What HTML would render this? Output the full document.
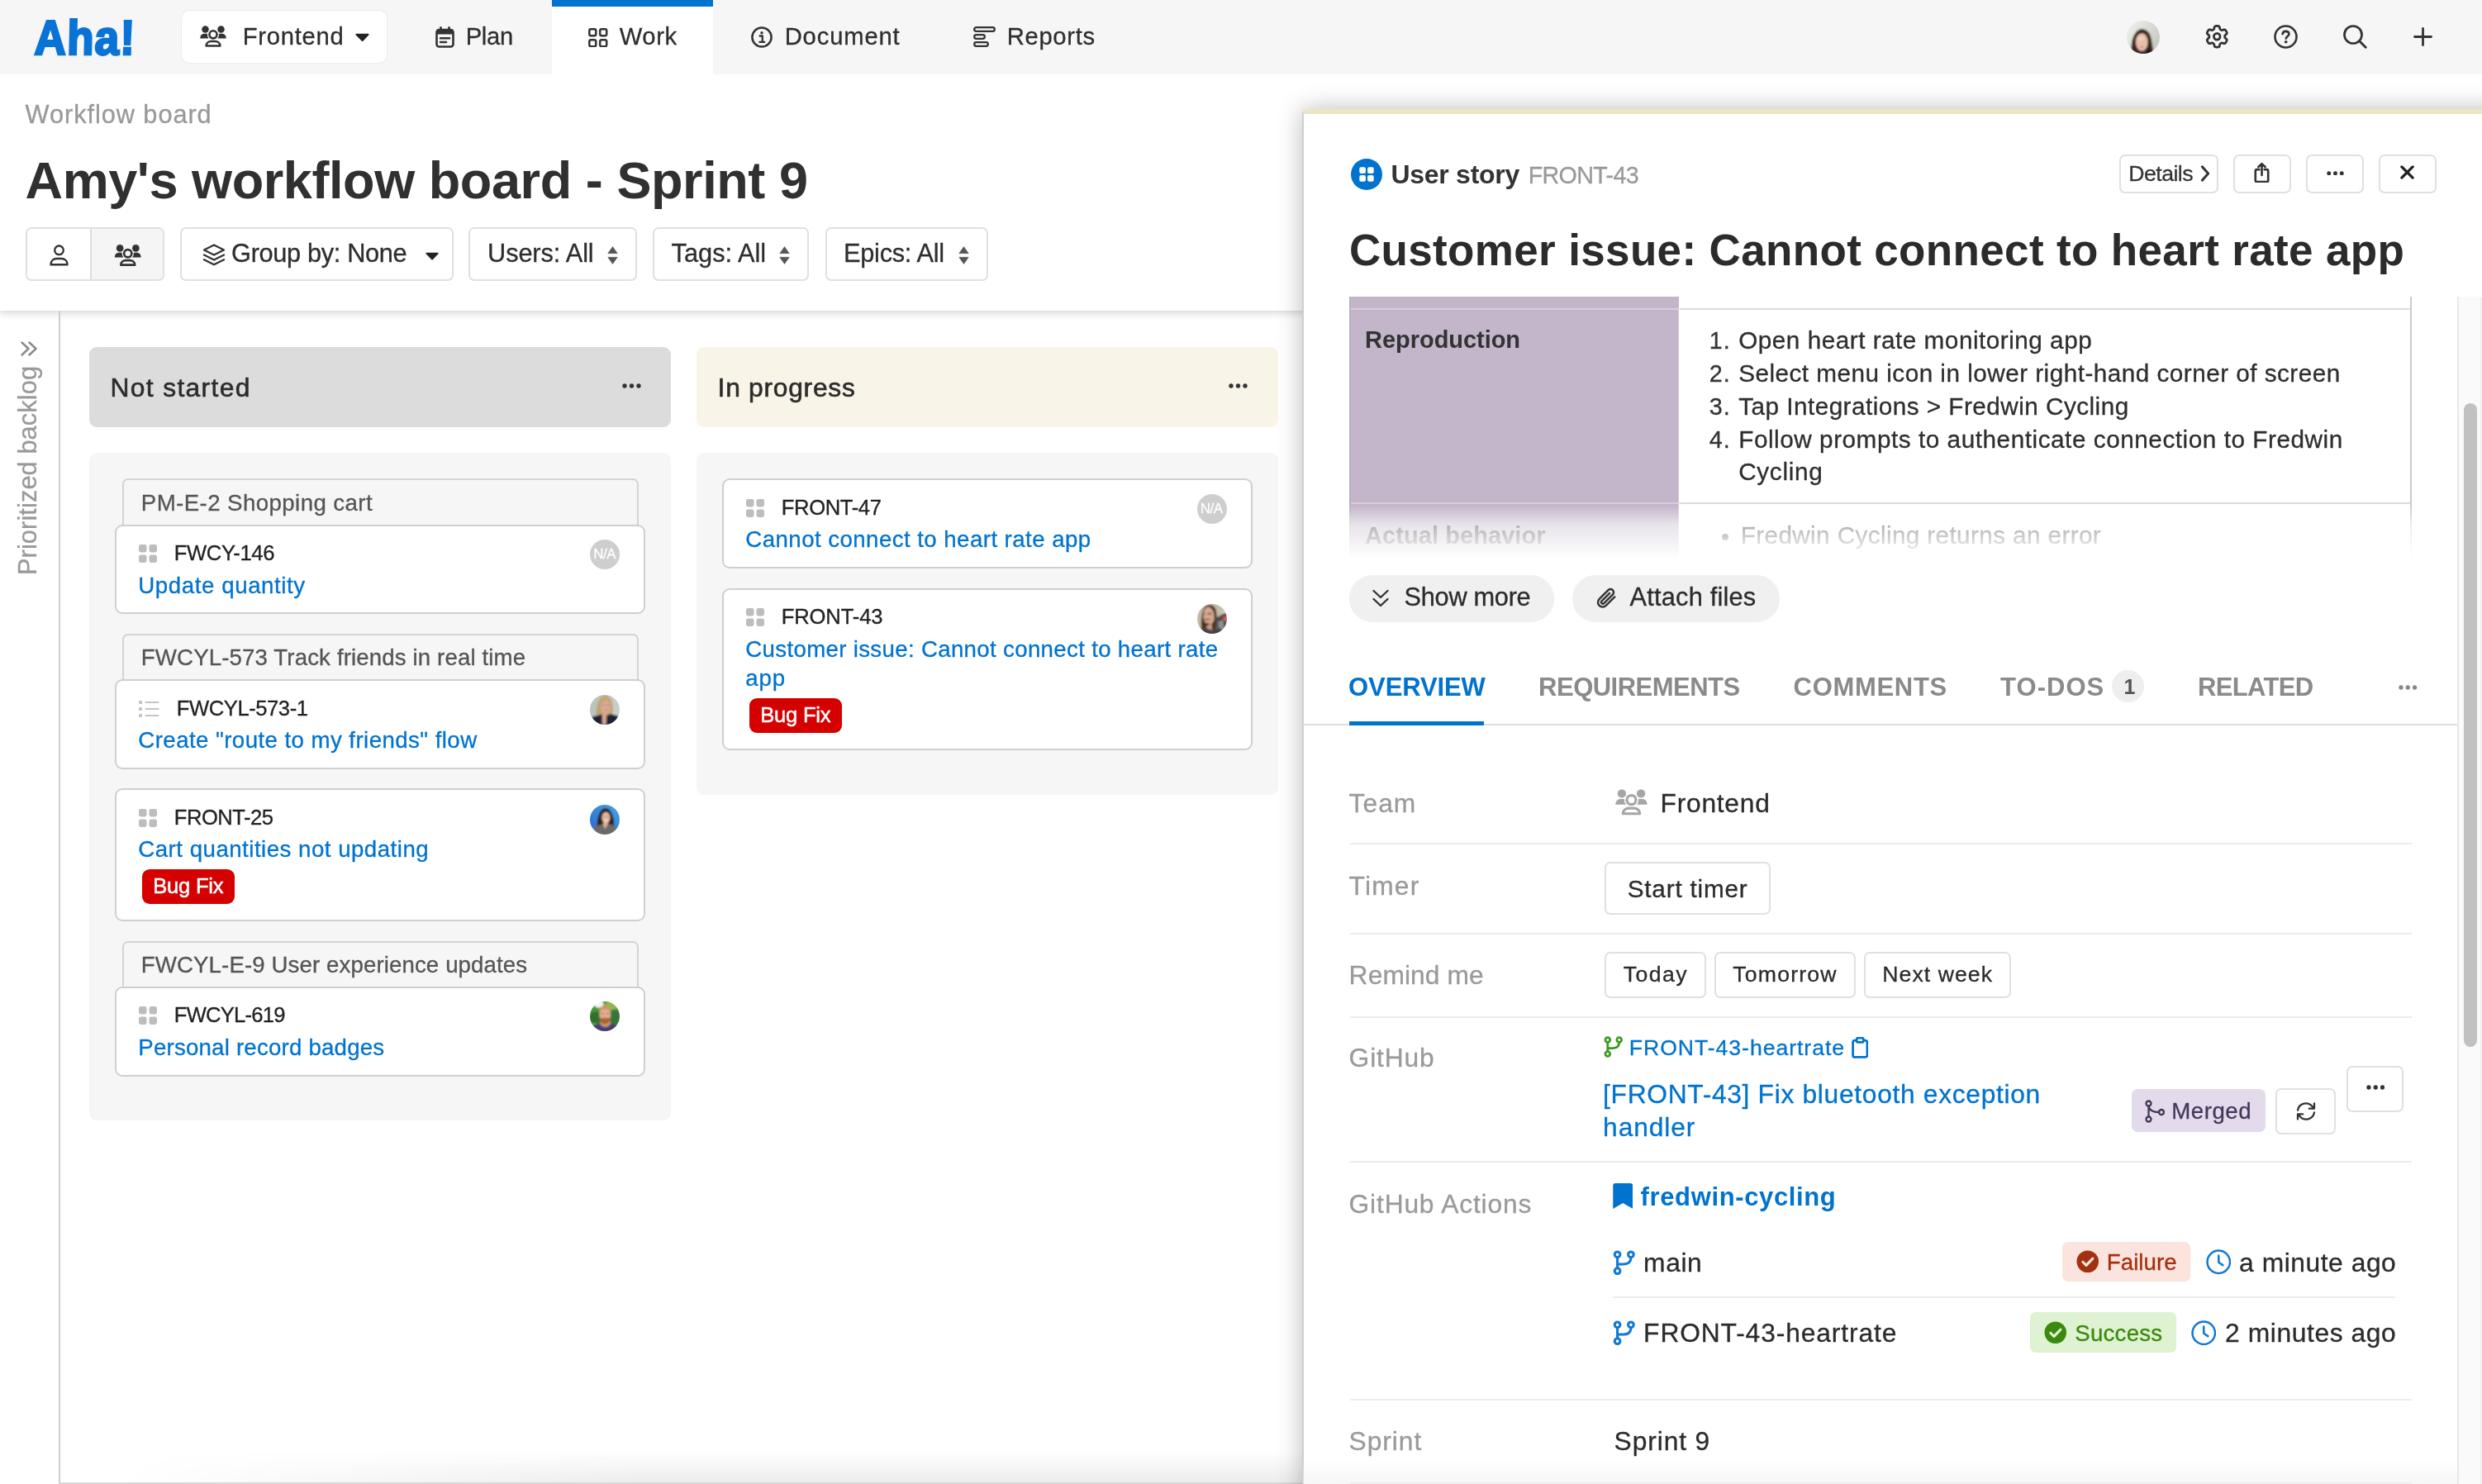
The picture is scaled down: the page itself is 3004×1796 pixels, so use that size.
<!DOCTYPE html>
<html lang="en"><head><meta charset="utf-8"><title>Amy's workflow board - Sprint 9</title>
<style>
*{box-sizing:border-box;margin:0;padding:0}
html,body{width:3004px;height:1796px;overflow:hidden;background:#fff}
body{position:relative;font-family:"Liberation Sans", sans-serif;color:#2e2e2e}
.t{position:absolute;white-space:nowrap;line-height:1;display:block;-webkit-text-stroke-width:.3px}
a.t{text-decoration:none}
body>nav,body>header,body>main,body>aside{will-change:transform}
nav,header,main,aside,section,article,ul,ol,li,h1,h2,h3,p,button{display:block;position:static;list-style:none;font:inherit;border:0;background:none}
.btn{border:2px solid #e0e0e0;border-radius:7px;background:#fff}
.card{border:2px solid #cfcfcf;border-radius:9px;background:#fff}
.epic{border:2px solid #d4d4d4;border-bottom:0;border-radius:7px 7px 0 0;background:#f6f6f6}
</style></head>
<body>
<svg width="0" height="0" style="position:absolute"><defs><filter id="avblur" x="-10%" y="-10%" width="120%" height="120%"><feGaussianBlur stdDeviation="1"/></filter><linearGradient id="gA" x1="0" y1="0" x2="1" y2=".6"><stop offset="0" stop-color="#f7f7f3"/><stop offset="1" stop-color="#c3c8bf"/></linearGradient><linearGradient id="gB" x1="0" y1="1" x2="1" y2="0"><stop offset="0" stop-color="#2262cc"/><stop offset="1" stop-color="#48ace6"/></linearGradient></defs></svg>
<header><div style="position:absolute;left:0px;top:90px;width:3004px;height:286px;background:#fff;box-shadow:0 3px 9px rgba(0,0,0,.16)"></div><span class="t" id="t0" style="left:30.6px;top:124.0px;font-size:30.75px;color:#999;letter-spacing:0.927px;">Workflow board</span><h1 class="t" id="t1" style="left:30.6px;top:187.0px;font-size:63px;font-weight:700;-webkit-text-stroke-width:0;color:#303030;letter-spacing:-0.425px;">Amy's workflow board - Sprint 9</h1><div class="btn" style="position:absolute;left:31px;top:275px;width:168px;height:65px;overflow:hidden"><div style="position:absolute;left:75.500px;top:0;width:2px;height:61px;background:#dcdcdc"></div><div style="position:absolute;left:77.500px;top:0;width:90px;height:61px;background:#f5f5f5"></div></div><svg style="position:absolute;left:60px;top:296px;" width="23" height="26" viewBox="0 0 23 26"><g fill="none" stroke="#333" stroke-width="2.400" stroke-linejoin="round"><circle cx="11.500" cy="6.800" r="5.300"/><path d="M1.500 24.300c0-4.800 3.300-7.300 7-7.300h6c3.700 0 7 2.500 7 7.300z"/></g></svg><svg style="position:absolute;left:137.5px;top:295.5px;" width="33.5" height="26" viewBox="0 0 33 26.500"><g fill="#333"><circle cx="6.700" cy="4.500" r="4.400"/><circle cx="26.300" cy="4.500" r="4.400"/><path d="M.3 15.800C.3 12.300 2.300 10 5.500 10H9.270A7.300 7.300 0 0 0 11 15.800Z"/><path d="M32.700 15.800C32.700 12.300 30.700 10 27.500 10H23.730A7.300 7.300 0 0 1 22 15.800Z"/></g><g fill="none" stroke="#333" stroke-width="2.700"><circle cx="16.500" cy="11" r="4.700"/><path d="M7.900 25.100C7.900 21.500 11 19.500 14 19.500H19C22 19.500 25.100 21.500 25.100 25.100Z" stroke-linejoin="round"/></g></svg><button class="btn" style="position:absolute;left:217.5px;top:275px;width:331.5px;height:65px;"></button><svg style="position:absolute;left:245px;top:295px;" width="28" height="27" viewBox="0 0 28 27"><g fill="none" stroke="#333" stroke-width="2.300" stroke-linejoin="round" stroke-linecap="round"><path d="M14 1.500l12 6-12 6-12-6z"/><path d="M2 13.500l12 6 12-6"/><path d="M2 19.300l12 6 12-6"/></g></svg><span class="t" id="t2" style="left:280.1px;top:292.0px;font-size:30.75px;letter-spacing:-0.345px;">Group by: None</span><svg style="position:absolute;left:515px;top:305px;" width="16" height="10" viewBox="0 0 16 10"><path d="M1.200 .8h13.600c.8 0 1.200.9.600 1.500l-6.600 6.900c-.4.400-1 .4-1.400 0L.6 2.300C0 1.700.4.800 1.200.8z" fill="#222"/></svg><button class="btn" style="position:absolute;left:566.5px;top:275px;width:204.5px;height:65px;"></button><span class="t" id="t3" style="left:590.1px;top:292.0px;font-size:30.75px;letter-spacing:-0.140px;">Users: All</span><svg style="position:absolute;left:735px;top:297.5px;" width="13" height="22" viewBox="0 0 13 22"><path d="M6.500 .5l5.800 8.200H.7zM6.500 21.500l5.800-8.200H.7z" fill="#555" stroke="#555" stroke-width=".5" stroke-linejoin="round"/></svg><button class="btn" style="position:absolute;left:790px;top:275px;width:189px;height:65px;"></button><span class="t" id="t4" style="left:812.6px;top:292.0px;font-size:30.75px;letter-spacing:0.010px;">Tags: All</span><svg style="position:absolute;left:942.5px;top:297.5px;" width="13" height="22" viewBox="0 0 13 22"><path d="M6.500 .5l5.800 8.200H.7zM6.500 21.500l5.800-8.200H.7z" fill="#555" stroke="#555" stroke-width=".5" stroke-linejoin="round"/></svg><button class="btn" style="position:absolute;left:998.5px;top:275px;width:197px;height:65px;"></button><span class="t" id="t5" style="left:1021.1px;top:292.0px;font-size:30.75px;letter-spacing:-0.295px;">Epics: All</span><svg style="position:absolute;left:1160px;top:297.5px;" width="13" height="22" viewBox="0 0 13 22"><path d="M6.500 .5l5.800 8.200H.7zM6.500 21.500l5.800-8.200H.7z" fill="#555" stroke="#555" stroke-width=".5" stroke-linejoin="round"/></svg></header>
<nav><div style="position:absolute;left:0px;top:0px;width:3004px;height:90px;background:#f6f6f6"></div><a class="t" id="t6" style="left:40.5px;top:16.8px;font-size:59px;font-weight:700;-webkit-text-stroke-width:0;color:#0a73d6;-webkit-text-stroke:2.700px #0a73d6;letter-spacing:1.300px;transform:scaleX(.9) skewX(-1.500deg);transform-origin:0 100%">Aha!</a><button style="position:absolute;left:220px;top:13px;width:248px;height:63px;background:#fff;border-radius:9px;box-shadow:0 0 0 1px #ececec"></button><svg style="position:absolute;left:242px;top:31px;" width="32" height="26" viewBox="0 0 33 26.500"><g fill="#333"><circle cx="6.700" cy="4.500" r="4.400"/><circle cx="26.300" cy="4.500" r="4.400"/><path d="M.3 15.800C.3 12.300 2.300 10 5.500 10H9.270A7.300 7.300 0 0 0 11 15.800Z"/><path d="M32.700 15.800C32.700 12.300 30.700 10 27.500 10H23.730A7.300 7.300 0 0 1 22 15.800Z"/></g><g fill="none" stroke="#333" stroke-width="2.700"><circle cx="16.500" cy="11" r="4.700"/><path d="M7.900 25.100C7.900 21.500 11 19.500 14 19.500H19C22 19.500 25.100 21.500 25.100 25.100Z" stroke-linejoin="round"/></g></svg><span class="t" id="t7" style="left:293.7px;top:29.8px;font-size:29.21px;letter-spacing:0.727px;">Frontend</span><svg style="position:absolute;left:429.5px;top:39.5px;" width="17" height="10.5" viewBox="0 0 16 10"><path d="M1.200 .8h13.600c.8 0 1.200.9.600 1.500l-6.600 6.900c-.4.400-1 .4-1.400 0L.6 2.300C0 1.700.4.800 1.200.8z" fill="#222"/></svg><svg style="position:absolute;left:527px;top:32px;" width="23" height="26" viewBox="0 0 23 26"><g fill="none" stroke="#333" stroke-width="2.600" stroke-linecap="round" stroke-linejoin="round"><rect x="1.5" y="4" width="20" height="20.5" rx="3"/><path d="M6.500 1.300v4.500M16.500 1.300v4.500M6 14.200h11M6 19h7"/></g><path d="M1.500 7a3 3 0 0 1 3-3h14a3 3 0 0 1 3 3v2.500h-20z" fill="#333"/></svg><span class="t" id="t8" style="left:563.7px;top:29.8px;font-size:29.21px;letter-spacing:-0.323px;">Plan</span><div style="position:absolute;left:668px;top:0px;width:195px;height:90px;background:#fff;border-top:8px solid #0073cf"></div><svg style="position:absolute;left:712px;top:33.5px;" width="23.5" height="23.5" viewBox="0 0 23.5 23.5"><g fill="none" stroke="#333" stroke-width="2.500"><rect x="1.3" y="1.3" width="8" height="8" rx="2"/><rect x="1.3" y="14.2" width="8" height="8" rx="2"/><rect x="14.2" y="1.3" width="8" height="8" rx="2"/><rect x="14.2" y="14.2" width="8" height="8" rx="2"/></g></svg><span class="t" id="t9" style="left:749.7px;top:29.8px;font-size:29.21px;letter-spacing:0.624px;">Work</span><svg style="position:absolute;left:909px;top:32px;" width="26" height="26" viewBox="0 0 26 26"><circle cx="13" cy="13" r="11.600" fill="none" stroke="#333" stroke-width="2.500"/><circle cx="13" cy="7.800" r="1.700" fill="#333"/><path d="M10.600 11.500h3.200v7.200M10.300 18.800h6" fill="none" stroke="#333" stroke-width="2.300" stroke-linecap="round" stroke-linejoin="round"/></svg><span class="t" id="t10" style="left:949.7px;top:29.8px;font-size:29.21px;letter-spacing:0.839px;">Document</span><svg style="position:absolute;left:1178px;top:32px;" width="27" height="25" viewBox="0 0 27 25"><g fill="none" stroke="#333" stroke-width="2.300"><rect x="1.200" y="1.200" width="24.600" height="4.600" rx="2.300"/><rect x="1.200" y="10.200" width="12.600" height="4.600" rx="2.300"/><rect x="1.200" y="19.200" width="16.600" height="4.600" rx="2.300"/></g></svg><span class="t" id="t11" style="left:1218.7px;top:29.8px;font-size:29.21px;letter-spacing:0.703px;">Reports</span><svg style="position:absolute;left:2574.0px;top:25.0px;border-radius:50%" width="40" height="40" viewBox="0 0 40 40"><g filter="url(#avblur)"><rect x="-4" y="-4" width="48" height="48" fill="url(#gA)"/><path d="M5 44C5.500 30 6 22 9.500 16.500C12.500 11.500 16 10 19 10.300C24 10.800 28 14 29.500 21C31 28 31.500 35 33.500 44Z" fill="#3a2620"/><ellipse cx="18.300" cy="26" rx="7.300" ry="10.800" fill="#e8bea8"/><ellipse cx="17" cy="21.500" rx="5" ry="3" fill="#efcdb9"/><path d="M25 33C27 34 30 37 33 44H24Z" fill="#241818"/><ellipse cx="18.500" cy="32" rx="2.600" ry=".9" fill="#c98f86"/></g></svg><svg style="position:absolute;left:2669px;top:30px;" width="28.5" height="28.5" viewBox="0 0 29 29"><path d="M14.50 1.41L15.36 1.44L16.20 1.55L17.02 1.84L17.65 2.74L17.92 4.43L18.26 5.43L18.75 5.87L19.29 6.20L19.84 6.50L20.48 6.71L21.51 6.51L23.11 5.89L24.21 5.99L24.86 6.55L25.38 7.23L25.84 7.96L26.24 8.71L26.56 9.50L26.73 10.35L26.26 11.35L24.93 12.43L24.23 13.22L24.10 13.87L24.08 14.50L24.10 15.13L24.23 15.78L24.93 16.57L26.26 17.65L26.73 18.65L26.56 19.50L26.24 20.29L25.84 21.04L25.38 21.77L24.86 22.45L24.21 23.01L23.11 23.11L21.51 22.49L20.48 22.29L19.84 22.50L19.29 22.80L18.75 23.13L18.26 23.57L17.92 24.57L17.65 26.26L17.02 27.16L16.20 27.45L15.36 27.56L14.50 27.59L13.64 27.56L12.80 27.45L11.98 27.16L11.35 26.26L11.08 24.57L10.74 23.57L10.25 23.13L9.71 22.80L9.16 22.50L8.52 22.29L7.49 22.49L5.89 23.11L4.79 23.01L4.14 22.45L3.62 21.77L3.16 21.04L2.76 20.29L2.44 19.50L2.27 18.65L2.74 17.65L4.07 16.57L4.77 15.78L4.90 15.13L4.92 14.50L4.90 13.87L4.77 13.22L4.07 12.43L2.74 11.35L2.27 10.35L2.44 9.50L2.76 8.71L3.16 7.96L3.62 7.23L4.14 6.55L4.79 5.99L5.89 5.89L7.49 6.51L8.52 6.71L9.16 6.50L9.71 6.20L10.25 5.87L10.74 5.43L11.08 4.43L11.35 2.74L11.98 1.84L12.80 1.55L13.64 1.44Z" fill="none" stroke="#333" stroke-width="2.800" stroke-linejoin="round"/><circle cx="14.500" cy="14.500" r="3.900" fill="none" stroke="#333" stroke-width="2.800"/></svg><svg style="position:absolute;left:2752px;top:30px;" width="29" height="29" viewBox="0 0 29 29"><circle cx="14.500" cy="14.500" r="13" fill="none" stroke="#333" stroke-width="2.600"/><path d="M10.600 11.200c.3-2.200 1.900-3.300 3.900-3.300 2.200 0 3.900 1.300 3.900 3.300 0 2.700-3.600 2.800-3.600 5.400" fill="none" stroke="#333" stroke-width="2.600" stroke-linecap="round"/><circle cx="14.700" cy="20.800" r="1.800" fill="#333"/></svg><svg style="position:absolute;left:2836px;top:30px;" width="28.5" height="28.5" viewBox="0 0 28.5 28.500"><circle cx="12" cy="12" r="10.500" fill="none" stroke="#333" stroke-width="2.700"/><path d="M19.700 19.700l7.500 7.500" stroke="#333" stroke-width="2.900" stroke-linecap="round"/></svg><svg style="position:absolute;left:2921px;top:33px;" width="23" height="23" viewBox="0 0 23 23"><path d="M11.500 1.500v20M1.500 11.500h20" stroke="#333" stroke-width="2.8" stroke-linecap="round"/></svg></nav>
<main><div style="position:absolute;left:71px;top:376px;width:2px;height:1420px;background:#cfcfcf"></div><div style="position:absolute;left:71px;top:1794px;width:1520px;height:2px;background:#d8d8d8"></div><div style="position:absolute;left:140px;top:1756px;width:1440px;height:38px;background:linear-gradient(rgba(0,0,0,0),rgba(0,0,0,.075));-webkit-mask-image:linear-gradient(to right,transparent,#000 45%);mask-image:linear-gradient(to right,transparent,#000 45%)"></div><svg style="position:absolute;left:24.5px;top:412.5px;" width="20" height="18" viewBox="0 0 20 18"><path d="M1.500 1.500l8 7.500-8 7.500M10.500 1.500l8 7.500-8 7.500" fill="none" stroke="#888" stroke-width="2.400" stroke-linecap="round" stroke-linejoin="round"/></svg><span class="t" id="t12" style="left:0.0px;top:-25.5px;font-size:30.75px;color:#999;letter-spacing:0.097px;left:43.500px;top:696px;transform-origin:0 0;transform:rotate(-90deg) translateY(-25.400px)">Prioritized backlog</span><div style="position:absolute;left:108px;top:420px;width:704px;height:97px;background:#dcdcdc;border-radius:9px"></div><h2 class="t" id="t13" style="left:133.6px;top:453.6px;font-size:31.77px;color:#2b2b2b;letter-spacing:1.333px;-webkit-text-stroke:.6px #2b2b2b">Not started</h2><svg style="position:absolute;left:752.5px;top:464px;" width="23" height="6" viewBox="0 0 23 6"><circle cx="3" cy="3" r="2.700" fill="#333"/><circle cx="11.5" cy="3" r="2.700" fill="#333"/><circle cx="20" cy="3" r="2.700" fill="#333"/></svg><div style="position:absolute;left:108px;top:548px;width:704px;height:808px;background:#f6f6f6;border-radius:9px"></div><div class="epic" style="position:absolute;left:148px;top:579px;width:625px;height:60px;"></div><span class="t" id="t14" style="left:170.8px;top:594.6px;font-size:27.67px;color:#555;letter-spacing:0.408px;">PM-E-2 Shopping cart</span><article class="card" style="position:absolute;left:139px;top:634.5px;width:642px;height:108.5px;"></article><svg style="position:absolute;left:168px;top:659.0px;" width="22" height="22" viewBox="0 0 22 22"><rect x="0" y="0" width="9.500" height="9.500" rx="2.400" fill="#bdbdbd"/><rect x="0" y="12.5" width="9.500" height="9.500" rx="2.400" fill="#bdbdbd"/><rect x="12.5" y="0" width="9.500" height="9.500" rx="2.400" fill="#bdbdbd"/><rect x="12.5" y="12.5" width="9.500" height="9.500" rx="2.400" fill="#bdbdbd"/></svg><span class="t" id="t16" style="left:210.8px;top:657.3px;font-size:25.62px;color:#222;letter-spacing:-0.374px;">FWCY-146</span><a class="t" id="t17" style="left:167.3px;top:694.6px;font-size:27.67px;color:#0073cf;letter-spacing:0.580px;">Update quantity</a><div style="position:absolute;left:714.0px;top:653.0px;width:36px;height:36px;border-radius:50%;background:#cecece"></div><span class="t" id="t15" style="left:718.2px;top:662.5px;font-size:16.91px;color:#fff;letter-spacing:-0.375px;">N/A</span><div class="epic" style="position:absolute;left:148px;top:766.5px;width:625px;height:60px;"></div><span class="t" id="t18" style="left:170.8px;top:782.1px;font-size:27.67px;color:#555;letter-spacing:0.122px;">FWCYL-573 Track friends in real time</span><article class="card" style="position:absolute;left:139px;top:822px;width:642px;height:108.5px;"></article><svg style="position:absolute;left:168px;top:848px;" width="25" height="20" viewBox="0 0 25 20"><rect x="0" y="0" width="4" height="4" rx="1" fill="#c4c4c4"/><rect x="7.500" y="1" width="17" height="2" rx="1" fill="#c4c4c4"/><rect x="0" y="8" width="4" height="4" rx="1" fill="#c4c4c4"/><rect x="7.500" y="9" width="17" height="2" rx="1" fill="#c4c4c4"/><rect x="0" y="16" width="4" height="4" rx="1" fill="#c4c4c4"/><rect x="7.500" y="17" width="17" height="2" rx="1" fill="#c4c4c4"/></svg><span class="t" id="t19" style="left:213.8px;top:844.8px;font-size:25.62px;color:#222;letter-spacing:-0.449px;">FWCYL-573-1</span><a class="t" id="t20" style="left:167.3px;top:882.1px;font-size:27.67px;color:#0073cf;letter-spacing:0.426px;">Create "route to my friends" flow</a><svg style="position:absolute;left:714.0px;top:840.5px;border-radius:50%" width="36" height="36" viewBox="0 0 40 40"><g filter="url(#avblur)"><rect x="-4" y="-4" width="48" height="48" fill="#b9c4bb"/><rect x="24" y="-4" width="20" height="48" fill="#c6cecb"/><path d="M10 38C8.500 30 8 20 10.500 12C12.500 5 16 1 21 1C26 1 29.500 5 30.500 13C31.300 20 30.500 25 28.500 27L12 38Z" fill="#c3a172"/><path d="M0 44L3 29.500L16.500 26L19 44ZM19.800 44L22 28L28 25.500L38 28.500L41 44Z" fill="#1b2036"/><rect x="16.500" y="22" width="5.500" height="17" fill="#d9a68c"/><ellipse cx="21.500" cy="16" rx="6.500" ry="9.200" fill="#dcaa94"/><path d="M14.500 13C15 7 18 4.500 21.500 4.500C25 4.500 28 7 28.500 12C26 9 24 8 21 8.500C18 9 16 10.500 14.500 13Z" fill="#c9a877"/><ellipse cx="18.500" cy="14" rx="1.700" ry=".7" fill="#8a6a58"/><ellipse cx="24.500" cy="13.700" rx="1.700" ry=".7" fill="#8a6a58"/><ellipse cx="21.800" cy="20.300" rx="2.300" ry=".8" fill="#c07f78"/></g></svg><article class="card" style="position:absolute;left:139px;top:954px;width:642px;height:160.5px;"></article><svg style="position:absolute;left:168px;top:978.5px;" width="22" height="22" viewBox="0 0 22 22"><rect x="0" y="0" width="9.500" height="9.500" rx="2.400" fill="#bdbdbd"/><rect x="0" y="12.5" width="9.500" height="9.500" rx="2.400" fill="#bdbdbd"/><rect x="12.5" y="0" width="9.500" height="9.500" rx="2.400" fill="#bdbdbd"/><rect x="12.5" y="12.5" width="9.500" height="9.500" rx="2.400" fill="#bdbdbd"/></svg><span class="t" id="t21" style="left:210.8px;top:976.8px;font-size:25.62px;color:#222;letter-spacing:-0.517px;">FRONT-25</span><a class="t" id="t22" style="left:167.3px;top:1014.1px;font-size:27.67px;color:#0073cf;letter-spacing:0.485px;">Cart quantities not updating</a><div style="position:absolute;left:172px;top:1052px;width:111.5px;height:42px;background:#d50000;border-radius:9px"></div><span class="t" id="t23" style="left:185.3px;top:1059.8px;font-size:25.62px;color:#fff;letter-spacing:-0.275px;-webkit-text-stroke:.5px #fff">Bug Fix</span><svg style="position:absolute;left:714.0px;top:973.5px;border-radius:50%" width="36" height="36" viewBox="0 0 40 40"><g filter="url(#avblur)"><rect x="-4" y="-4" width="48" height="48" fill="url(#gB)"/><path d="M9.500 30C9.500 15 14 4.500 21 4.500C28 4.500 32.500 15 32.500 30Z" fill="#2a1a16"/><path d="M-2 44L4.500 31C9 27.500 13 26.200 16.600 26.600L20.400 32.300L24.500 26.200C30 26 33.500 28.500 36.600 31L42 44Z" fill="#6b6a69"/><path d="M18.500 24H24.500L24 27L20.400 32.300L17 27Z" fill="#dcae96"/><ellipse cx="21.500" cy="17.300" rx="5.600" ry="7.600" fill="#e6bba3"/><ellipse cx="19.300" cy="15.600" rx="1.400" ry=".6" fill="#7a5a4c"/><ellipse cx="24" cy="15.600" rx="1.400" ry=".6" fill="#7a5a4c"/><ellipse cx="21.700" cy="21" rx="2.400" ry="1" fill="#f3e6de"/></g></svg><div class="epic" style="position:absolute;left:148px;top:1138.5px;width:625px;height:60px;"></div><span class="t" id="t24" style="left:170.8px;top:1154.1px;font-size:27.67px;color:#555;letter-spacing:0.098px;">FWCYL-E-9 User experience updates</span><article class="card" style="position:absolute;left:139px;top:1193.5px;width:642px;height:109px;"></article><svg style="position:absolute;left:168px;top:1218.0px;" width="22" height="22" viewBox="0 0 22 22"><rect x="0" y="0" width="9.500" height="9.500" rx="2.400" fill="#bdbdbd"/><rect x="0" y="12.5" width="9.500" height="9.500" rx="2.400" fill="#bdbdbd"/><rect x="12.5" y="0" width="9.500" height="9.500" rx="2.400" fill="#bdbdbd"/><rect x="12.5" y="12.5" width="9.500" height="9.500" rx="2.400" fill="#bdbdbd"/></svg><span class="t" id="t25" style="left:210.8px;top:1216.3px;font-size:25.62px;color:#222;letter-spacing:-0.777px;">FWCYL-619</span><a class="t" id="t26" style="left:167.3px;top:1253.6px;font-size:27.67px;color:#0073cf;letter-spacing:0.200px;">Personal record badges</a><svg style="position:absolute;left:714.0px;top:1212.0px;border-radius:50%" width="36" height="36" viewBox="0 0 40 40"><g filter="url(#avblur)"><rect x="-4" y="-4" width="48" height="48" fill="#4a9438"/><ellipse cx="8" cy="22" rx="9" ry="8" fill="#2f6f2e"/><ellipse cx="33" cy="21" rx="8" ry="10" fill="#35753a"/><ellipse cx="30" cy="5" rx="10" ry="6" fill="#8abb48"/><ellipse cx="6" cy="33" rx="8" ry="4" fill="#63a838"/><ellipse cx="12" cy="3.500" rx="6.500" ry="5" fill="#f3f7f3"/><path d="M-2 44L4.500 32L13.600 29.200C15.800 36 25 36 27.900 29.200L36.200 31.700L42 44Z" fill="#463c74"/><path d="M13.600 27H27.900V29.400C25 36 15.800 36 13.600 29.400Z" fill="#cf9674"/><ellipse cx="20.300" cy="18.500" rx="7.600" ry="10.300" fill="#e3ad94"/><path d="M12.600 16C12 8 16 5 20.800 5C25.500 5 29 8 28.300 16C27 11.500 24.500 10.500 20.500 10.500C16.500 10.500 14 11.500 12.600 16Z" fill="#c9995f"/><path d="M12.900 21C13.500 27.500 16.500 30.200 20.300 30.200C24 30.200 27 27.500 27.700 21C25.500 23.500 23.500 22 20.300 22C17 22 15 23.500 12.900 21Z" fill="#a6622f"/><ellipse cx="17" cy="16.600" rx="1.600" ry=".7" fill="#7a5340"/><ellipse cx="23.600" cy="16.600" rx="1.600" ry=".7" fill="#7a5340"/><ellipse cx="20.300" cy="24.300" rx="2" ry=".8" fill="#c97a6a"/></g></svg><div style="position:absolute;left:843px;top:420px;width:704px;height:97px;background:#f8f4e8;border-radius:9px"></div><h2 class="t" id="t27" style="left:868.6px;top:453.6px;font-size:31.77px;color:#2b2b2b;letter-spacing:0.729px;-webkit-text-stroke:.6px #2b2b2b">In progress</h2><svg style="position:absolute;left:1487px;top:464px;" width="23" height="6" viewBox="0 0 23 6"><circle cx="3" cy="3" r="2.700" fill="#333"/><circle cx="11.5" cy="3" r="2.700" fill="#333"/><circle cx="20" cy="3" r="2.700" fill="#333"/></svg><div style="position:absolute;left:843px;top:548px;width:704px;height:413.5px;background:#f6f6f6;border-radius:9px"></div><article class="card" style="position:absolute;left:874px;top:579px;width:642px;height:109px;"></article><svg style="position:absolute;left:903px;top:603.5px;" width="22" height="22" viewBox="0 0 22 22"><rect x="0" y="0" width="9.500" height="9.500" rx="2.400" fill="#bdbdbd"/><rect x="0" y="12.5" width="9.500" height="9.500" rx="2.400" fill="#bdbdbd"/><rect x="12.5" y="0" width="9.500" height="9.500" rx="2.400" fill="#bdbdbd"/><rect x="12.5" y="12.5" width="9.500" height="9.500" rx="2.400" fill="#bdbdbd"/></svg><span class="t" id="t29" style="left:945.8px;top:601.8px;font-size:25.62px;color:#222;letter-spacing:-0.374px;">FRONT-47</span><a class="t" id="t30" style="left:902.3px;top:639.1px;font-size:27.67px;color:#0073cf;letter-spacing:0.435px;">Cannot connect to heart rate app</a><div style="position:absolute;left:1448.5px;top:598.0px;width:36px;height:36px;border-radius:50%;background:#cecece"></div><span class="t" id="t28" style="left:1452.7px;top:607.5px;font-size:16.91px;color:#fff;letter-spacing:-0.375px;">N/A</span><article class="card" style="position:absolute;left:874px;top:711.5px;width:642px;height:196px;"></article><svg style="position:absolute;left:903px;top:736.0px;" width="22" height="22" viewBox="0 0 22 22"><rect x="0" y="0" width="9.500" height="9.500" rx="2.400" fill="#bdbdbd"/><rect x="0" y="12.5" width="9.500" height="9.500" rx="2.400" fill="#bdbdbd"/><rect x="12.5" y="0" width="9.500" height="9.500" rx="2.400" fill="#bdbdbd"/><rect x="12.5" y="12.5" width="9.500" height="9.500" rx="2.400" fill="#bdbdbd"/></svg><span class="t" id="t31" style="left:945.8px;top:734.3px;font-size:25.62px;color:#222;letter-spacing:-0.160px;">FRONT-43</span><a class="t" id="t32" style="left:902.3px;top:771.6px;font-size:27.67px;color:#0073cf;letter-spacing:0.321px;">Customer issue: Cannot connect to heart rate</a><a class="t" id="t33" style="left:902.3px;top:807.1px;font-size:27.67px;color:#0073cf;letter-spacing:0.848px;">app</a><div style="position:absolute;left:907px;top:845px;width:111.5px;height:42px;background:#d50000;border-radius:9px"></div><span class="t" id="t34" style="left:920.3px;top:852.8px;font-size:25.62px;color:#fff;letter-spacing:-0.275px;-webkit-text-stroke:.5px #fff">Bug Fix</span><svg style="position:absolute;left:1448.5px;top:730.5px;border-radius:50%" width="36" height="36" viewBox="0 0 40 40"><g filter="url(#avblur)"><rect x="-4" y="-4" width="48" height="48" fill="#c7bba8"/><path d="M26 18L40 11V30L31 38H26Z" fill="#4c4b4e"/><path d="M28 24L35 21L36 33L30 36Z" fill="#8d9094"/><circle cx="38" cy="19.500" r="3" fill="#d9623b"/><path d="M30 9L41 13V10Z" fill="#e9e4d8"/><path d="M5.500 33C5 24 5.500 14 8 7.500C10.500 2.500 14 1 17 1.200C21.500 1.500 25 4.500 25.800 11C26.600 18 26.500 28 25 35L5.500 35Z" fill="#4a3426"/><path d="M-2 44L4 33L13 31L20 35L30 33L38 36L42 44Z" fill="#4b4048"/><path d="M12.500 27H19.500L20 35L13 33Z" fill="#c9a08c"/><path d="M8.500 10C10 5.500 13 3.500 15.500 3.800C19 5 22 9 22.500 13C23 17 23.200 20 22.500 22.500C21 25.500 19 27.200 16 27.500C13 27.500 10.500 25.500 9.500 22.500C8 19 7.500 14 8.500 10Z" fill="#d6a890"/><ellipse cx="16.600" cy="13" rx="2.700" ry="1" fill="#4e362c"/><ellipse cx="9" cy="13.400" rx="1.900" ry=".8" fill="#4e362c"/><path d="M8.500 21.500C10 19.500 12 19.300 13 20C14.500 19.300 17 19.800 18.500 22C16 21.300 14.500 21.500 13 22C11.500 21.500 10 21.300 8.500 21.500Z" fill="#8a5842"/><ellipse cx="13.200" cy="27.300" rx="3.200" ry="1.500" fill="#2e1c14"/></g></svg></main>
<aside><div style="position:absolute;left:1576px;top:132px;width:1468px;height:1704px;background:#fff;border-top:6px solid #ede6c4;border-left:2px solid #cfcfcf;border-radius:5px 0 0 0;box-shadow:0 0 30px rgba(0,0,0,.27)"></div><svg style="position:absolute;left:1634.5px;top:192px;" width="38" height="38" viewBox="0 0 38 38"><circle cx="19" cy="19" r="19" fill="#0073cf"/><rect x="10.3" y="10.3" width="7.600" height="7.600" rx="2" fill="#fff"/><rect x="10.3" y="20.1" width="7.600" height="7.600" rx="2" fill="#fff"/><rect x="20.1" y="10.3" width="7.600" height="7.600" rx="2" fill="#fff"/><rect x="20.1" y="20.1" width="7.600" height="7.600" rx="2" fill="#fff"/></svg><span class="t" id="t35" style="left:1683.5px;top:195.4px;font-size:32px;font-weight:700;-webkit-text-stroke-width:0;color:#333;letter-spacing:-0.286px;">User story</span><span class="t" id="t36" style="left:1849.7px;top:198.2px;font-size:28.7px;color:#999;letter-spacing:-0.678px;">FRONT-43</span><button class="btn" style="position:absolute;left:2565px;top:187px;width:120px;height:47px;"></button><span class="t" id="t37" style="left:2576.3px;top:197.4px;font-size:26.65px;color:#333;letter-spacing:-0.529px;">Details</span><svg style="position:absolute;left:2662.5px;top:199.5px;" width="12" height="20" viewBox="0 0 12 22"><path d="M2 2l8 9-8 9" fill="none" stroke="#333" stroke-width="3.300" stroke-linecap="round" stroke-linejoin="round"/></svg><button class="btn" style="position:absolute;left:2702.5px;top:187px;width:70px;height:47px;"></button><svg style="position:absolute;left:2728px;top:196.5px;" width="19" height="24.5" viewBox="0 0 20 27"><g fill="none" stroke="#333" stroke-width="2.900" stroke-linecap="round" stroke-linejoin="round"><path d="M6.500 9H3.500a2 2 0 0 0-2 2v12.500a2 2 0 0 0 2 2h13a2 2 0 0 0 2-2V11a2 2 0 0 0-2-2h-3"/><path d="M10 16.500v-15M5.500 5.500L10 1.300l4.500 4.200"/></g></svg><button class="btn" style="position:absolute;left:2790.5px;top:187px;width:70px;height:47px;"></button><svg style="position:absolute;left:2815.5px;top:206.5px;" width="21" height="5.5" viewBox="0 0 23 6"><circle cx="3" cy="3" r="2.700" fill="#333"/><circle cx="11.5" cy="3" r="2.700" fill="#333"/><circle cx="20" cy="3" r="2.700" fill="#333"/></svg><button class="btn" style="position:absolute;left:2878.5px;top:187px;width:70px;height:47px;"></button><svg style="position:absolute;left:2905px;top:200px;" width="17" height="17" viewBox="0 0 18 18"><path d="M2 2l14 14M16 2L2 16" stroke="#222" stroke-width="3.500" stroke-linecap="round"/></svg><h2 class="t" id="t38" style="left:1632.9px;top:276.4px;font-size:53px;font-weight:700;-webkit-text-stroke-width:0;color:#2b2b2b;letter-spacing:0.352px;">Customer issue: Cannot connect to heart rate app</h2><section><div style="position:absolute;left:1633px;top:359px;width:399px;height:331px;background:#c3b6ca"></div><div style="position:absolute;left:1633px;top:359px;width:2px;height:331px;background:#b8b0bf"></div><div style="position:absolute;left:1635px;top:373px;width:397px;height:2px;background:#d6cedb"></div><div style="position:absolute;left:1635px;top:608px;width:397px;height:2px;background:#d6cedb"></div><div style="position:absolute;left:2032px;top:373px;width:887px;height:2px;background:#dadada"></div><div style="position:absolute;left:2032px;top:608px;width:887px;height:2px;background:#dadada"></div><div style="position:absolute;left:2917px;top:359px;width:2px;height:317px;background:#cbcbcb"></div><div style="position:absolute;left:2031px;top:373px;width:2px;height:330px;background:rgba(255,255,255,.25)"></div><span class="t" id="t39" style="left:1652.1px;top:397.4px;font-size:29px;font-weight:700;-webkit-text-stroke-width:0;color:#333;letter-spacing:-0.049px;">Reproduction</span><span class="t" id="t40" style="left:2068.7px;top:397.7px;font-size:28.7px;color:#333;letter-spacing:1.002px;">1.</span><span class="t" id="t41" style="left:2104.2px;top:396.8px;font-size:29.72px;letter-spacing:0.500px;">Open heart rate monitoring app</span><span class="t" id="t42" style="left:2068.7px;top:438.2px;font-size:28.7px;color:#333;letter-spacing:1.002px;">2.</span><span class="t" id="t43" style="left:2104.2px;top:437.3px;font-size:29.72px;letter-spacing:0.468px;">Select menu icon in lower right-hand corner of screen</span><span class="t" id="t44" style="left:2068.7px;top:477.7px;font-size:28.7px;color:#333;letter-spacing:1.002px;">3.</span><span class="t" id="t45" style="left:2104.2px;top:476.8px;font-size:29.72px;letter-spacing:0.463px;">Tap Integrations &gt; Fredwin Cycling</span><span class="t" id="t46" style="left:2068.7px;top:517.7px;font-size:28.7px;color:#333;letter-spacing:1.002px;">4.</span><span class="t" id="t47" style="left:2104.2px;top:516.8px;font-size:29.72px;letter-spacing:0.535px;">Follow prompts to authenticate connection to Fredwin</span><span class="t" id="t48" style="left:2104.2px;top:555.8px;font-size:29.72px;letter-spacing:0.679px;">Cycling</span><span class="t" id="t49" style="left:1652.1px;top:633.9px;font-size:29px;font-weight:700;-webkit-text-stroke-width:0;color:#333;letter-spacing:0.064px;">Actual behavior</span><div style="position:absolute;left:2084px;top:646px;width:8px;height:8px;background:#333;border-radius:50%"></div><span class="t" id="t50" style="left:2106.7px;top:633.3px;font-size:29.72px;letter-spacing:0.373px;">Fredwin Cycling returns an error</span><div style="position:absolute;left:1600px;top:612px;width:1340px;height:64px;background:linear-gradient(rgba(255,255,255,0),rgba(255,255,255,.62) 35%,#fff 100%)"></div><div style="position:absolute;left:1600px;top:676px;width:1340px;height:20px;background:#fff"></div></section><button style="position:absolute;left:1633px;top:696px;width:247.5px;height:57px;background:#f0f0f0;border-radius:28px"></button><svg style="position:absolute;left:1660px;top:712px;" width="22" height="24" viewBox="0 0 22 24"><path d="M2.500 3l8.500 8 8.500-8M2.500 13l8.500 8 8.500-8" fill="none" stroke="#333" stroke-width="2.400" stroke-linecap="round" stroke-linejoin="round"/></svg><span class="t" id="t51" style="left:1699.6px;top:708.3px;font-size:30.75px;color:#2b2b2b;letter-spacing:-0.302px;">Show more</span><button style="position:absolute;left:1903px;top:696px;width:250.5px;height:57px;background:#f0f0f0;border-radius:28px"></button><svg style="position:absolute;left:1930px;top:710px;" width="28" height="28" viewBox="0 0 26 26"><path d="M22.500 11.500l-9.800 9.800a5.200 5.200 0 0 1-7.400-7.400l10-10a3.500 3.500 0 0 1 5 5l-9.800 9.800a1.700 1.700 0 0 1-2.500-2.500l8.800-8.800" fill="none" stroke="#333" stroke-width="2.300" stroke-linecap="round" stroke-linejoin="round"/></svg><span class="t" id="t52" style="left:1972.6px;top:708.3px;font-size:30.75px;color:#2b2b2b;letter-spacing:0.201px;">Attach files</span><div style="position:absolute;left:1577px;top:875.5px;width:1397px;height:2px;background:#dedede"></div><span class="t" id="t53" style="left:1632.1px;top:815.8px;font-size:31px;font-weight:700;-webkit-text-stroke-width:0;color:#0073cf;letter-spacing:-0.128px;">OVERVIEW</span><div style="position:absolute;left:1633px;top:873px;width:163px;height:5px;background:#0073cf"></div><span class="t" id="t54" style="left:1862.1px;top:815.8px;font-size:31px;font-weight:700;-webkit-text-stroke-width:0;color:#8a8a8a;letter-spacing:-0.510px;">REQUIREMENTS</span><span class="t" id="t55" style="left:2170.6px;top:815.8px;font-size:31px;font-weight:700;-webkit-text-stroke-width:0;color:#8a8a8a;letter-spacing:0.687px;">COMMENTS</span><span class="t" id="t56" style="left:2421.1px;top:815.8px;font-size:31px;font-weight:700;-webkit-text-stroke-width:0;color:#8a8a8a;letter-spacing:1.027px;">TO-DOS</span><div style="position:absolute;left:2556px;top:811px;width:39px;height:39px;background:#eee;border-radius:50%"></div><span class="t" id="t57" style="left:2570.5px;top:818.8px;font-size:25px;font-weight:700;-webkit-text-stroke-width:0;color:#555;">1</span><span class="t" id="t58" style="left:2660.1px;top:815.8px;font-size:31px;font-weight:700;-webkit-text-stroke-width:0;color:#8a8a8a;letter-spacing:-0.660px;">RELATED</span><svg style="position:absolute;left:2903px;top:828.5px;" width="22.5" height="6" viewBox="0 0 23 6"><circle cx="3" cy="3" r="2.700" fill="#888"/><circle cx="11.5" cy="3" r="2.700" fill="#888"/><circle cx="20" cy="3" r="2.700" fill="#888"/></svg><div style="position:absolute;left:2974px;top:359px;width:30px;height:1437px;background:#fafafa;border-left:2px solid #e8e8e8;border-right:2px solid #efefef"></div><div style="position:absolute;left:2982px;top:488px;width:16px;height:779px;background:#c1c1c1;border-radius:8px"></div><span class="t" id="t59" style="left:1632.6px;top:957.1px;font-size:31.77px;color:#9a9a9a;letter-spacing:1.004px;">Team</span><svg style="position:absolute;left:1954.5px;top:955px;" width="39" height="31.5" viewBox="0 0 33 26.500"><g fill="#a6a6a6"><circle cx="6.700" cy="4.500" r="4.400"/><circle cx="26.300" cy="4.500" r="4.400"/><path d="M.3 15.800C.3 12.300 2.300 10 5.500 10H9.270A7.300 7.300 0 0 0 11 15.800Z"/><path d="M32.700 15.800C32.700 12.300 30.700 10 27.500 10H23.730A7.300 7.300 0 0 1 22 15.800Z"/></g><g fill="none" stroke="#a6a6a6" stroke-width="2.700"><circle cx="16.500" cy="11" r="4.700"/><path d="M7.900 25.100C7.900 21.500 11 19.500 14 19.500H19C22 19.500 25.100 21.500 25.100 25.100Z" stroke-linejoin="round"/></g></svg><span class="t" id="t60" style="left:2009.6px;top:957.1px;font-size:31.77px;color:#2b2b2b;letter-spacing:0.723px;">Frontend</span><div style="position:absolute;left:1634px;top:1020px;width:1285px;height:2px;background:#ececec"></div><span class="t" id="t61" style="left:1632.6px;top:1057.1px;font-size:31.77px;color:#9a9a9a;letter-spacing:1.175px;">Timer</span><button class="btn" style="position:absolute;left:1941.5px;top:1043px;width:201px;height:64px;"></button><span class="t" id="t62" style="left:1969.7px;top:1060.8px;font-size:29.72px;color:#2b2b2b;letter-spacing:0.796px;">Start timer</span><div style="position:absolute;left:1634px;top:1128.5px;width:1285px;height:2px;background:#ececec"></div><span class="t" id="t63" style="left:1632.6px;top:1165.1px;font-size:31.77px;color:#9a9a9a;letter-spacing:0.097px;">Remind me</span><button class="btn" style="position:absolute;left:1941.5px;top:1151.5px;width:123px;height:56px;"></button><span class="t" id="t64" style="left:1964.8px;top:1166.4px;font-size:26.65px;color:#2b2b2b;letter-spacing:1.418px;">Today</span><button class="btn" style="position:absolute;left:2074.5px;top:1151.5px;width:171px;height:56px;"></button><span class="t" id="t65" style="left:2097.3px;top:1166.4px;font-size:26.65px;color:#2b2b2b;letter-spacing:1.187px;">Tomorrow</span><button class="btn" style="position:absolute;left:2256px;top:1151.5px;width:177.5px;height:56px;"></button><span class="t" id="t66" style="left:2278.3px;top:1166.4px;font-size:26.65px;color:#2b2b2b;letter-spacing:1.049px;">Next week</span><div style="position:absolute;left:1634px;top:1229.5px;width:1285px;height:2px;background:#ececec"></div><span class="t" id="t67" style="left:1632.6px;top:1265.1px;font-size:31.77px;color:#9a9a9a;letter-spacing:0.865px;">GitHub</span><svg style="position:absolute;left:1941px;top:1254px;" width="23.5" height="26" viewBox="0 0 27 31"><g fill="none" stroke="#3d9a22" stroke-width="3.3" stroke-linecap="round"><circle cx="5.200" cy="5.400" r="3.400"/><circle cx="21.800" cy="5.400" r="3.400"/><circle cx="5.200" cy="25.600" r="3.400"/><path d="M5.200 9v13M21.800 9C21.800 14.500 18.500 17.300 12.500 17.300H5.200"/></g></svg><a class="t" id="t68" style="left:1971.8px;top:1255.4px;font-size:26.65px;color:#0073cf;letter-spacing:0.940px;">FRONT-43-heartrate</a><svg style="position:absolute;left:2240.5px;top:1254.5px;" width="20.5" height="26" viewBox="0 0 20 25.500"><g fill="none" stroke="#0073cf" stroke-width="2.700" stroke-linejoin="round"><rect x="1.500" y="4" width="17" height="20" rx="2.500"/><rect x="6" y="1.200" width="8" height="5" rx="1.500" fill="#fff"/></g></svg><a class="t" id="t69" style="left:1940.1px;top:1308.6px;font-size:31.77px;color:#0073cf;letter-spacing:0.681px;">[FRONT-43] Fix bluetooth exception</a><a class="t" id="t70" style="left:1940.1px;top:1349.1px;font-size:31.77px;color:#0073cf;letter-spacing:0.872px;">handler</a><div style="position:absolute;left:2579.5px;top:1318px;width:162px;height:52px;background:#e3dbec;border-radius:7px"></div><svg style="position:absolute;left:2595.5px;top:1331px;" width="24.5" height="28" viewBox="0 0 24.500 28"><g fill="none" stroke="#46375a" stroke-width="2.300" stroke-linecap="round"><circle cx="4.500" cy="4.500" r="3"/><circle cx="4.500" cy="23.500" r="3"/><circle cx="20" cy="15" r="3"/><path d="M4.500 7.500v13M4.500 8c1 5 5 7 12.500 7"/></g></svg><span class="t" id="t71" style="left:2628.3px;top:1331.1px;font-size:27.67px;color:#46375a;letter-spacing:0.514px;">Merged</span><button class="btn" style="position:absolute;left:2754px;top:1317px;width:73px;height:55.5px;"></button><svg style="position:absolute;left:2777.5px;top:1331.5px;" width="26" height="26" viewBox="0 0 26 26"><g fill="none" stroke="#333" stroke-width="2.300" stroke-linecap="round" stroke-linejoin="round"><path d="M3 11.500a10 10 0 0 1 17.500-4.500l2 2.500M23 3.500v6.200h-6.200"/><path d="M23 14.500a10 10 0 0 1-17.500 4.500l-2-2.500M3 22.500v-6.200h6.200"/></g></svg><button class="btn" style="position:absolute;left:2840px;top:1290px;width:69px;height:55.5px;"></button><svg style="position:absolute;left:2863.5px;top:1312.5px;" width="22.5" height="6" viewBox="0 0 23 6"><circle cx="3" cy="3" r="2.700" fill="#333"/><circle cx="11.5" cy="3" r="2.700" fill="#333"/><circle cx="20" cy="3" r="2.700" fill="#333"/></svg><div style="position:absolute;left:1634px;top:1405px;width:1285px;height:2px;background:#ececec"></div><span class="t" id="t72" style="left:1632.6px;top:1442.1px;font-size:31.77px;color:#9a9a9a;letter-spacing:0.815px;">GitHub Actions</span><svg style="position:absolute;left:1951.5px;top:1432px;" width="24.5" height="31" viewBox="0 0 24 31"><path d="M0 3a3 3 0 0 1 3-3h18a3 3 0 0 1 3 3v28l-12-7-12 7z" fill="#0073cf"/></svg><a class="t" id="t73" style="left:1985.6px;top:1432.8px;font-size:31px;font-weight:700;-webkit-text-stroke-width:0;color:#0073cf;letter-spacing:0.626px;">fredwin-cycling</a><svg style="position:absolute;left:1951.5px;top:1512.5px;" width="27.5" height="30.5" viewBox="0 0 27 31"><g fill="none" stroke="#1279d3" stroke-width="3.1" stroke-linecap="round"><circle cx="5.200" cy="5.400" r="3.400"/><circle cx="21.800" cy="5.400" r="3.400"/><circle cx="5.200" cy="25.600" r="3.400"/><path d="M5.200 9v13M21.800 9C21.800 14.500 18.500 17.300 12.500 17.300H5.200"/></g></svg><span class="t" id="t74" style="left:1989.1px;top:1512.6px;font-size:31.77px;color:#2b2b2b;letter-spacing:0.614px;">main</span><div style="position:absolute;left:2496px;top:1502.5px;width:155px;height:48.5px;background:#fbe4dd;border-radius:7px"></div><svg style="position:absolute;left:2513px;top:1513.0px;" width="27.5" height="27.5" viewBox="0 0 28 28"><circle cx="14" cy="14" r="13.500" fill="#a3300f"/><path d="M8 14.500l4.200 4.200 8-8.400" fill="none" stroke="#fbe4dd" stroke-width="3.200" stroke-linecap="round" stroke-linejoin="round"/></svg><span class="t" id="t75" style="left:2549.8px;top:1514.1px;font-size:27.67px;color:#a3300f;letter-spacing:0.051px;">Failure</span><svg style="position:absolute;left:2669.5px;top:1512.0px;" width="30.5" height="30.5" viewBox="0 0 30 30"><circle cx="15" cy="15" r="13.500" fill="none" stroke="#1279d3" stroke-width="2.500"/><path d="M15 7.500v8l5 3.300" fill="none" stroke="#1279d3" stroke-width="2.500" stroke-linecap="round" stroke-linejoin="round"/></svg><span class="t" id="t76" style="left:2710.1px;top:1512.6px;font-size:31.77px;color:#2b2b2b;letter-spacing:0.548px;">a minute ago</span><svg style="position:absolute;left:1951.5px;top:1598px;" width="27.5" height="30.5" viewBox="0 0 27 31"><g fill="none" stroke="#1279d3" stroke-width="3.1" stroke-linecap="round"><circle cx="5.200" cy="5.400" r="3.400"/><circle cx="21.800" cy="5.400" r="3.400"/><circle cx="5.200" cy="25.600" r="3.400"/><path d="M5.200 9v13M21.800 9C21.800 14.500 18.500 17.300 12.500 17.300H5.200"/></g></svg><span class="t" id="t77" style="left:1989.1px;top:1598.1px;font-size:31.77px;color:#2b2b2b;letter-spacing:0.878px;">FRONT-43-heartrate</span><div style="position:absolute;left:2457px;top:1588px;width:177px;height:48.5px;background:#dff2d1;border-radius:7px"></div><svg style="position:absolute;left:2474px;top:1598.5px;" width="27.5" height="27.5" viewBox="0 0 28 28"><circle cx="14" cy="14" r="13.500" fill="#3b8a0e"/><path d="M8 14.500l4.200 4.200 8-8.400" fill="none" stroke="#dff2d1" stroke-width="3.200" stroke-linecap="round" stroke-linejoin="round"/></svg><span class="t" id="t78" style="left:2511.3px;top:1599.6px;font-size:27.67px;color:#3b8a0e;letter-spacing:0.220px;">Success</span><svg style="position:absolute;left:2651.5px;top:1597.5px;" width="30.5" height="30.5" viewBox="0 0 30 30"><circle cx="15" cy="15" r="13.500" fill="none" stroke="#1279d3" stroke-width="2.500"/><path d="M15 7.500v8l5 3.300" fill="none" stroke="#1279d3" stroke-width="2.500" stroke-linecap="round" stroke-linejoin="round"/></svg><span class="t" id="t79" style="left:2693.1px;top:1598.1px;font-size:31.77px;color:#2b2b2b;letter-spacing:0.596px;">2 minutes ago</span><div style="position:absolute;left:1951.5px;top:1569px;width:947px;height:2px;background:#ececec"></div><div style="position:absolute;left:1634px;top:1692.5px;width:1285px;height:2px;background:#ececec"></div><span class="t" id="t80" style="left:1632.6px;top:1729.1px;font-size:31.77px;color:#9a9a9a;letter-spacing:0.943px;">Sprint</span><span class="t" id="t81" style="left:1953.6px;top:1729.1px;font-size:31.77px;color:#2b2b2b;letter-spacing:0.888px;">Sprint 9</span><div style="position:absolute;left:1634px;top:1793.5px;width:1285px;height:2px;background:#ececec"></div><div style="position:absolute;left:1577px;top:1766px;width:1397px;height:30px;background:linear-gradient(rgba(255,255,255,0),rgba(240,240,240,.55))"></div></aside>
</body></html>
